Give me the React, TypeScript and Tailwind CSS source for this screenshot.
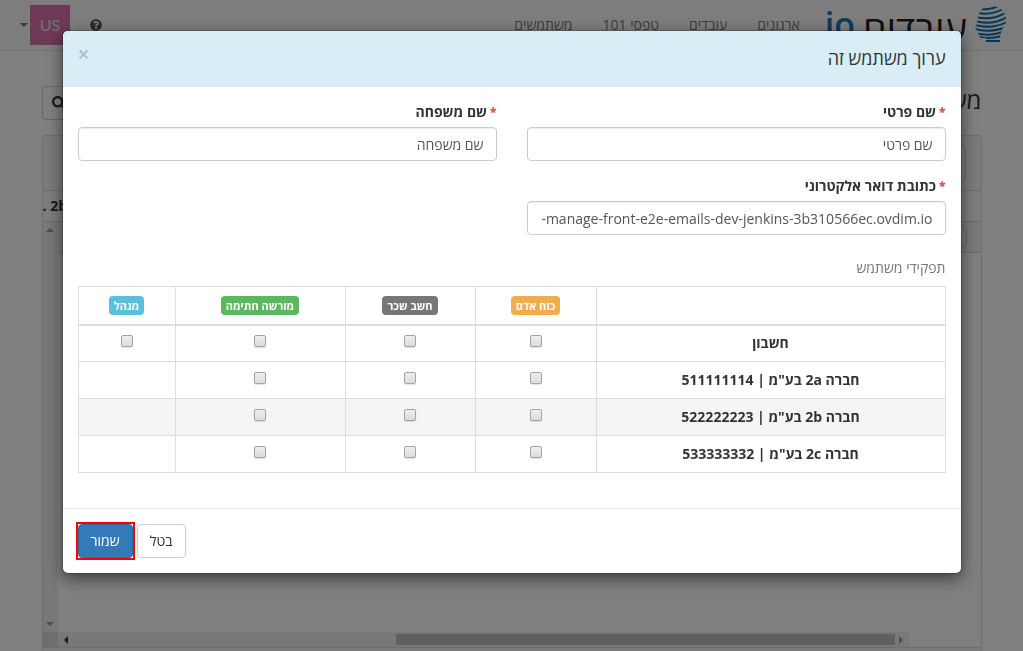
import { FaQuestionCircle, FaSearch } from 'react-icons/fa';

const navItems = ['ארגונים', 'עובדים', 'טפסי 101', 'משתמשים'];

const roles = [
  { id: 'hr', name: 'כוח אדם', color: 'bg-[#f0ad4e]', width: 'w-[121px]' },
  { id: 'payroll', name: 'חשב שכר', color: 'bg-[#777777]', width: 'w-[130px]' },
  { id: 'signer', name: 'מורשה חתימה', color: 'bg-[#5cb85c]', width: 'w-[170px]' },
  { id: 'admin', name: 'מנהל', color: 'bg-[#5bc0de]', width: 'w-[97px]' },
];

const rows = [
  { name: 'חשבון', roles: ['hr', 'payroll', 'signer', 'admin'] },
  { name: 'חברה 2a בע"מ | 511111114', roles: ['hr', 'payroll', 'signer'] },
  { name: 'חברה 2b בע"מ | 522222223', roles: ['hr', 'payroll', 'signer'], active: true },
  { name: 'חברה 2c בע"מ | 533333332', roles: ['hr', 'payroll', 'signer'] },
];

const inputClass =
  'block w-full h-[34px] px-3 border border-[#cccccc] rounded text-sm text-[#555555] bg-white shadow-[inset_0_1px_1px_rgba(0,0,0,0.075)] outline-none placeholder:text-[#555555]';

function LogoMark() {
  return (
    <svg viewBox="0 0 32 36" className="w-8 h-9" fill="none" stroke="#0f6fb0" strokeWidth="2">
      <clipPath id="head">
        <path d="M7 3C12-1 24-1 28 5c4 6 4 12 0 17-2 4-3 6-3 14H11v-4H6c-2-1-2-4-3-6l-3-4c4-6 1-13 7-19z" />
      </clipPath>
      <g clipPath="url(#head)">
        <path d="M5 3c7 1 13 0 20-4" />
        <path d="M3 7c9 2 18 0 27-5" />
        <path d="M1 11c11 3 21 1 31-5" />
        <path d="M0 15c11 3 22 2 32-4" />
        <path d="M0 19c11 3 22 2 32-3" />
        <path d="M0 23c10 3 21 2 32-2" />
        <path d="M0 27c10 3 20 2 31-2" />
        <path d="M4 31c8 2 15 1 23-1" />
        <path d="M11 35h16" />
      </g>
    </svg>
  );
}

function Navbar() {
  return (
    <nav className="h-[51px] flex justify-between border-b border-[#e7e7e7] bg-[#fbfbfb] px-4">
      <div className="flex">
        <a href="#" className="flex items-start gap-2 pt-1.5">
          <LogoMark />
          <span dir="ltr" className="flex items-start gap-2">
            <span className="text-[34px] leading-9 font-semibold text-[#1278be]">io</span>
            <span className="text-[38px] leading-[44px] font-medium text-[#222222]">עובדים</span>
          </span>
        </a>
        <ul className="flex items-center ps-2.5">
          {navItems.map((item) => (
            <li key={item}>
              <a href="#" className="block px-[15px] py-[15px] leading-5 text-[#777777]">{item}</a>
            </li>
          ))}
        </ul>
      </div>
      <div className="flex items-center gap-5">
        <FaQuestionCircle className="size-3 text-[#555555]" />
        <button className="flex items-center gap-0.5 pe-1">
          <span className="size-10 flex items-center justify-center bg-[#dc73ac] font-[Lato] text-base text-[#e8e0e5]">US</span>
          <span className="border-x-4 border-t-4 border-x-transparent border-t-[#777777]" />
        </button>
      </div>
    </nav>
  );
}

function UsersPage() {
  return (
    <main className="flex-1 flex flex-col w-[940px] max-w-full mx-auto pt-[35px] min-h-0">
      <div className="flex justify-between items-start h-[49px]">
        <h1 className="text-2xl leading-7 text-[#333333]">משתמשים</h1>
        <button aria-label="חיפוש" className="w-10 h-[34px] flex items-center justify-end pe-[9px] border border-[#cccccc] rounded">
          <FaSearch className="size-3.5 text-[#333333]" />
        </button>
      </div>
      <section className="flex-1 flex flex-col border border-b-0 border-[#dddddd] rounded-t">
        <div className="h-[55px] flex items-center px-[15px] bg-[#f5f5f5] border-b border-[#dddddd]">
          <div className="w-60 h-[34px] border border-[#cccccc] rounded" />
        </div>
        <div className="h-[31px] flex items-center justify-end bg-[#f8f8f8] border-b border-[#d4d4d4] font-bold overflow-hidden">
          <span dir="ltr">. 2b</span>
        </div>
        <div className="flex-1 flex">
          <div className="flex-1 flex flex-col justify-between">
            <div className="h-[31px] bg-[#f3f3f3] border-b border-[#d4d4d4] flex items-center px-3.5">
              <div className="w-40 h-[22px] border border-[#cccccc] rounded" />
            </div>
            {/* Horizontal scrollbar */}
            <div dir="ltr" className="self-end h-[15px] w-[851px] flex items-center justify-between bg-[#f1f1f1] px-1.5">
              <span className="border-y-4 border-r-4 border-y-transparent border-r-[#333333]" />
              <span className="flex-1 flex justify-end px-1">
                <span className="h-[11px] w-[499px] bg-[#c1c1c1]" />
              </span>
              <span className="border-y-4 border-l-4 border-y-transparent border-l-[#999999]" />
            </div>
          </div>
          {/* Vertical scrollbar */}
          <div className="w-[15px] flex flex-col bg-[#f1f1f1]">
            <div className="flex-1 flex flex-col items-center justify-between py-1.5">
              <span className="border-x-4 border-b-4 border-x-transparent border-b-[#999999]" />
              <span className="border-x-4 border-t-4 border-x-transparent border-t-[#999999]" />
            </div>
            <div className="h-[15px] bg-[#dcdcdc]" />
          </div>
        </div>
        <div className="h-1 bg-[#f5f5f5] border-t border-[#dddddd]" />
      </section>
    </main>
  );
}

function Label({ htmlFor, text }: { htmlFor: string; text: string }) {
  return (
    <label htmlFor={htmlFor} className="flex gap-[3px] mb-[5px] leading-5 font-bold">
      <span className="text-xs leading-5 font-extrabold text-[#d9534f]">*</span>
      <span>{text}</span>
    </label>
  );
}

function RolesTable() {
  return (
    <table className="w-full table-fixed border-collapse border border-[#dddddd] text-center">
      <thead>
        <tr className="h-[38px] border-b-2 border-[#dddddd]">
          <th className="border-x border-[#dddddd]" />
          {roles.map((role) => (
            <th key={role.id} className={`border-x border-[#dddddd] ${role.width}`}>
              <span className={`inline-block px-[5px] h-[19px] leading-[19px] rounded-sm text-[11px] font-bold text-white ${role.color}`}>
                {role.name}
              </span>
            </th>
          ))}
        </tr>
      </thead>
      <tbody>
        {rows.map((row) => (
          <tr key={row.name} className={`h-[37px] border-b border-[#dddddd] ${row.active ? 'bg-[#f5f5f5]' : ''}`}>
            <th className="border-x border-[#dddddd] font-bold">{row.name}</th>
            {roles.map((role) => (
              <td key={role.id} className="border-x border-[#dddddd]">
                {row.roles.includes(role.id) && (
                  <input
                    type="checkbox"
                    aria-label={`${row.name} ${role.name}`}
                    className="appearance-none block mx-auto mb-1 size-3 rounded-[2px] border border-[#a4a4a4] bg-linear-to-b from-[#eeeeee] to-[#dcdcdc] shadow-[0_1px_1px_rgba(0,0,0,0.12)]"
                  />
                )}
              </td>
            ))}
          </tr>
        ))}
      </tbody>
    </table>
  );
}

function EditUserModal() {
  return (
    <div className="fixed inset-0 bg-black/50 pt-[30px] px-2.5 overflow-hidden">
      <div
        role="dialog"
        aria-labelledby="modal-title"
        className="w-[900px] max-w-full mx-auto bg-white bg-clip-padding border border-black/20 rounded-md shadow-[0_5px_15px_rgba(0,0,0,0.5)]"
      >
        <div className="h-14 p-[15px] flex items-start justify-between bg-[#d9edf7] border-b border-[#e5e5e5] rounded-t-[5px]">
          <h4 id="modal-title" className="text-lg leading-[25px]">ערוך משתמש זה</h4>
          <button aria-label="סגור" className="text-[21px] leading-4 font-bold text-black/20">×</button>
        </div>

        <form>
          <div className="p-[15px] pb-[35px]">
            <div className="grid grid-cols-2 gap-x-[30px] gap-y-[15px]">
              <div>
                <Label htmlFor="first-name" text="שם פרטי" />
                <input id="first-name" type="text" placeholder="שם פרטי" className={inputClass} />
              </div>
              <div>
                <Label htmlFor="last-name" text="שם משפחה" />
                <input id="last-name" type="text" placeholder="שם משפחה" className={inputClass} />
              </div>
              <div>
                <Label htmlFor="email" text="כתובת דואר אלקטרוני" />
                <input
                  id="email"
                  type="text"
                  dir="ltr"
                  defaultValue="-manage-front-e2e-emails-dev-jenkins-3b310566ec.ovdim.io"
                  className={`${inputClass} text-right`}
                />
              </div>
            </div>
            <p className="mt-[23px] mb-2 leading-5 text-[#777777]">תפקידי משתמש</p>
            <RolesTable />
          </div>

          <div className="p-[15px] flex justify-end gap-1 border-t border-[#e5e5e5]">
            <button type="button" className="h-[34px] px-3 border border-[#cccccc] rounded bg-white">בטל</button>
            <span className="flex outline-2 outline-[#ff0000]">
              <button type="button" className="h-[34px] px-3 border border-[#2e6da4] rounded bg-[#337ab7] text-white">
                שמור
              </button>
            </span>
          </div>
        </form>
      </div>
    </div>
  );
}

export default function App() {
  return (
    <div dir="rtl" className="h-screen flex flex-col overflow-hidden bg-white font-['Open_Sans',sans-serif] text-sm text-[#333333]">
      <Navbar />
      <UsersPage />
      <EditUserModal />
    </div>
  );
}
